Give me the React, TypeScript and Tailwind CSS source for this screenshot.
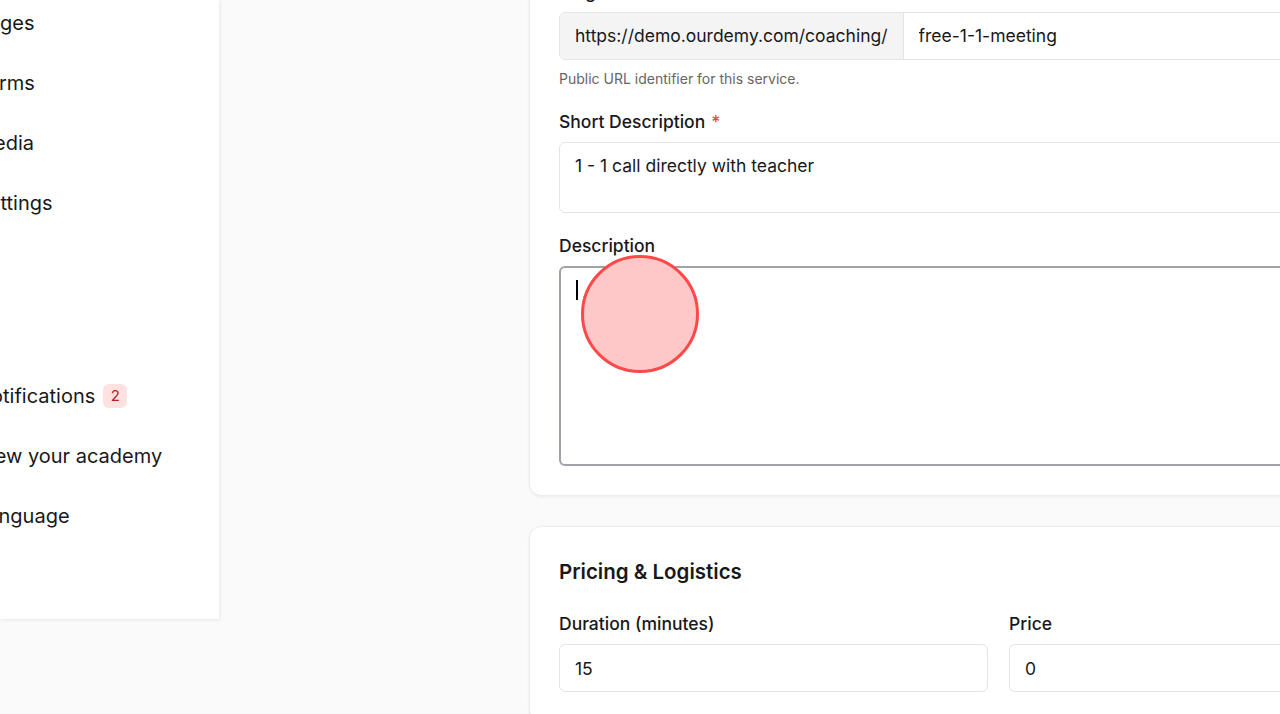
import React from "react";

const font = { fontFamily: "Inter, 'Noto Sans', sans-serif" };

function NavItem({ label, badge }: { label: string; badge?: string }) {
  return (
    <div className="ml-[-24px] flex h-[60px] items-center gap-[8px] text-[20px] text-[#18181b]">
      <span>{label}</span>
      {badge && (
        <span className="flex h-[24px] w-[24px] items-center justify-center rounded-[6px] bg-[#fee2e2] text-[15px] text-[#b91c1c]">
          {badge}
        </span>
      )}
    </div>
  );
}

function Label({ children, required }: { children: React.ReactNode; required?: boolean }) {
  return (
    <div className="mb-[8px] h-[24px] text-[17.5px] font-medium leading-[24px] text-[#18181b]">
      {children}
      {required && <span className="ml-[6px] text-[#ef4444]">*</span>}
    </div>
  );
}

export default function App() {
  return (
    <div className="flex h-[714px] w-[1280px] overflow-hidden bg-[#fafafa]" style={font}>
      <aside className="relative z-10 flex h-[619px] w-[219px] shrink-0 flex-col overflow-hidden bg-white shadow-[1px_1px_4px_rgba(0,0,0,0.08)]">
        <div className="mt-[-7px] flex flex-col">
          <NavItem label="Pages" />
          <NavItem label="Forms" />
          <NavItem label="Media" />
          <NavItem label="Settings" />
          <div className="h-[133px]" />
          <NavItem label="Notifications" badge="2" />
          <NavItem label="View your academy" />
          <NavItem label="Language" />
        </div>
      </aside>

      <main className="ml-[310px] flex w-[900px] shrink-0 flex-col gap-[30px]">
        <section className="relative mt-[-59px] rounded-[12px] border border-[#ececec] bg-white px-[29px] pb-[29px] pt-[38px] shadow-[0_1px_3px_rgba(0,0,0,0.06)]">
          <Label>Slug</Label>
          <div className="flex h-[48px] overflow-hidden rounded-[6px] border border-[#e4e4e7] text-[17.5px] text-[#18181b]">
            <div className="flex items-center border-r border-[#e4e4e7] bg-[#f4f4f5] px-[15px]">
              https://demo.ourdemy.com/coaching/
            </div>
            <input
              readOnly
              value="free-1-1-meeting"
              className="flex-1 bg-white px-[15px] text-[17.5px] text-[#18181b] outline-none"
              style={font}
            />
          </div>
          <div className="mt-[9px] h-[20px] text-[14px] leading-[20px] text-[#666666]">
            Public URL identifier for this service.
          </div>

          <div className="mt-[21px]">
            <Label required>Short Description</Label>
            <textarea
              readOnly
              value="1 - 1 call directly with teacher"
              className="block h-[71px] w-full resize-none rounded-[6px] border border-[#e4e4e7] bg-white px-[15px] py-[11px] text-[17.5px] leading-[24px] text-[#18181b] outline-none"
              style={font}
            />
          </div>

          <div className="mt-[21px]">
            <Label>Description</Label>
            <div className="relative h-[200px] w-full rounded-[6px] border-2 border-[#a1a1aa] bg-white">
              <span className="absolute left-[15px] top-[12px] h-[20px] w-[1.5px] bg-black" />
            </div>
          </div>

          <div className="pointer-events-none absolute left-[51px] top-[313px] h-[118px] w-[118px] rounded-full border-[3px] border-[#ff4848] bg-[#ffc8c8]" />
        </section>

        <section className="rounded-[12px] border border-[#ececec] bg-white px-[29px] pb-[29px] pt-[31px] shadow-[0_1px_3px_rgba(0,0,0,0.06)]">
          <h2 className="h-[28px] text-[20.5px] font-semibold leading-[28px] text-[#18181b]">Pricing &amp; Logistics</h2>
          <div className="mt-[26px] grid grid-cols-[429px_1fr] gap-[21px]">
            <div>
              <Label>Duration (minutes)</Label>
              <input
                readOnly
                value="15"
                className="block h-[48px] w-full rounded-[6px] border border-[#e4e4e7] bg-white px-[15px] text-[17.5px] text-[#18181b] outline-none"
                style={font}
              />
            </div>
            <div>
              <Label>Price</Label>
              <input
                readOnly
                value="0"
                className="block h-[48px] w-full rounded-[6px] border border-[#e4e4e7] bg-white px-[15px] text-[17.5px] text-[#18181b] outline-none"
                style={font}
              />
            </div>
          </div>
        </section>
      </main>
    </div>
  );
}
